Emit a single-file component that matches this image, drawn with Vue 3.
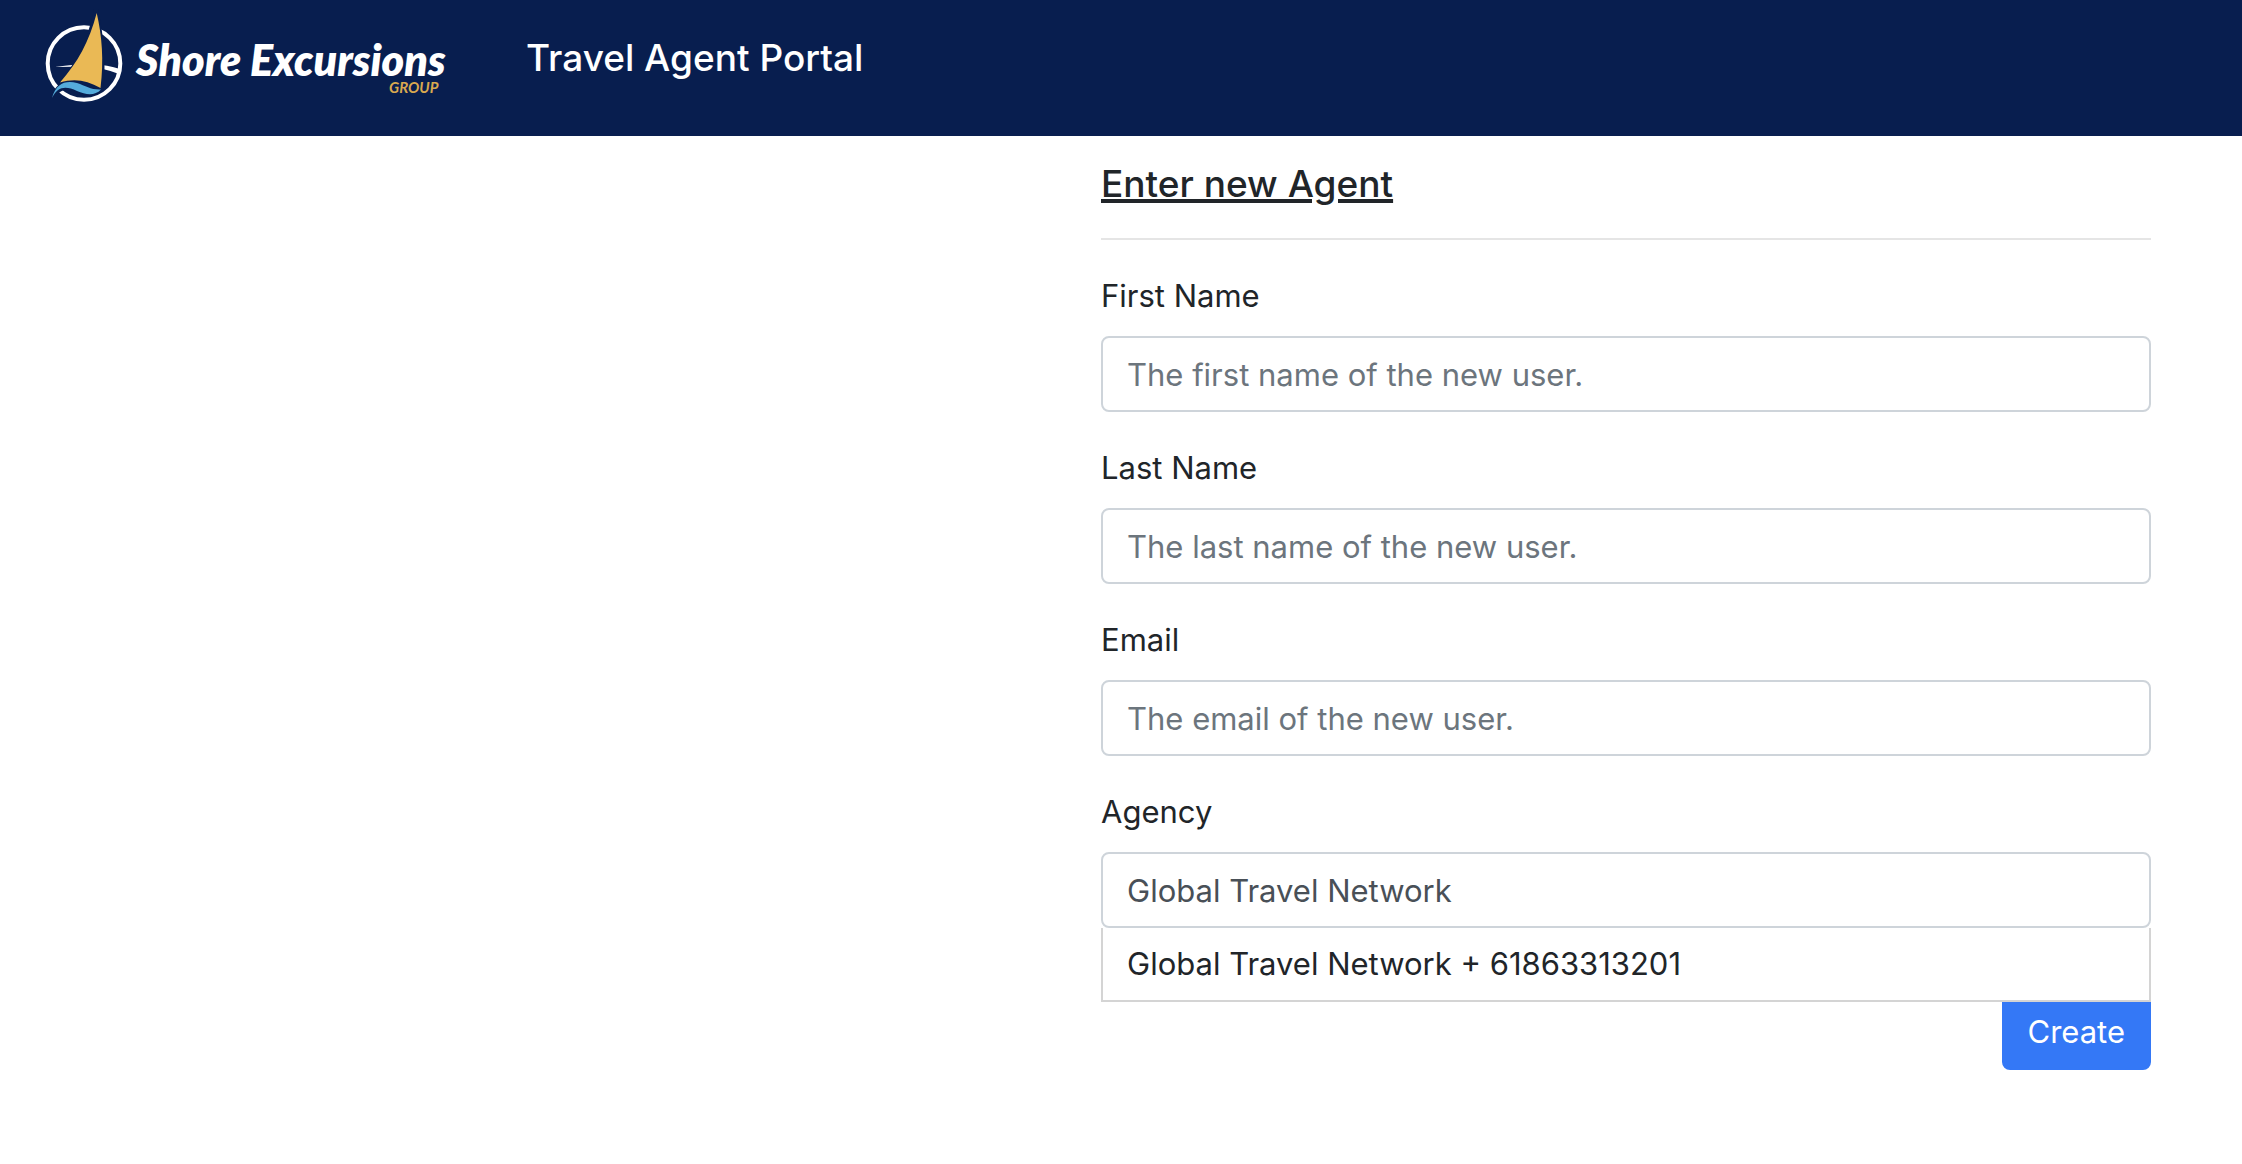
<script setup>
import { ref } from 'vue'

const fields = [
  { id: 'first-name', label: 'First Name', type: 'text', placeholder: 'The first name of the new user.' },
  { id: 'last-name', label: 'Last Name', type: 'text', placeholder: 'The last name of the new user.' },
  { id: 'email', label: 'Email', type: 'email', placeholder: 'The email of the new user.' },
]

const values = ref({ 'first-name': '', 'last-name': '', email: '' })
const agency = ref('Global Travel Network')
const suggestions = ['Global Travel Network + 61863313201']
</script>

<template>
  <header class="topbar">
    <a class="brand" href="#" aria-label="Shore Excursions Group">
      <svg class="logo" width="406" height="106" viewBox="44 6 406 106">
        <circle cx="84" cy="63.500" r="36.300" fill="none" stroke="#fff" stroke-width="4" />
        <path d="M55 67 Q75 64 92 64 Q108 65 120 69 L119 74 Q108 70 99 68 Q78 66 55 67Z" fill="#fff" />
        <path d="M94 9 L98 9 C104 38 106 60 103.500 89 L101 90 C88 82 74 80 58 83 C76 64 88 40 94 9Z" fill="#081e4f" />
        <path d="M50 99 C56 79 72 78 84 82 C92 85 97 87 103 87 C98 98 84 97 75 93 C64 88 60 90 54 99Z" fill="#081e4f" />
        <path d="M96.700 13 C102 36 104 60 100.500 88 C87 80 74 78 60 82.500 C78 62 89 42 96.700 13Z" fill="#eab955" />
        <path d="M52 98 C56 83 66 80 77 83 C86 86 91 90 101 89.500 C95 96 86 95 77 91 C66 86 58 86 52 98Z" fill="#55acdb" />
        <text class="logo-name" x="136" y="76">Shore Excursions</text>
        <text class="logo-group" x="389" y="93">GROUP</text>
      </svg>
    </a>
    <span class="portal">Travel Agent Portal</span>
  </header>

  <main class="page">
    <form class="agent-form" autocomplete="off" @submit.prevent>
      <h1 class="title">Enter new Agent</h1>
      <hr class="rule" />

      <div v-for="field in fields" :key="field.id" class="group">
        <label :for="field.id">{{ field.label }}</label>
        <input :id="field.id" v-model="values[field.id]" class="control" :type="field.type" :placeholder="field.placeholder" />
      </div>

      <div class="group agency">
        <label for="agency">Agency</label>
        <input id="agency" v-model="agency" class="control" type="text" />
        <ul class="suggestions">
          <li v-for="item in suggestions" :key="item">
            <button class="suggestion" type="button">{{ item }}</button>
          </li>
        </ul>
      </div>

      <div class="actions">
        <button class="create" type="submit">Create</button>
      </div>
    </form>
  </main>
</template>

<style>
body {
  margin: 0;
  background: #fff;
}
</style>

<style scoped>
.topbar,
.page {
  font-family: Inter, "Liberation Sans", sans-serif;
  box-sizing: border-box;
}

.topbar {
  display: flex;
  align-items: flex-start;
  gap: 76px;
  padding: 6px 44px 24px;
  background: #081e4f;
  color: #fff;
}

.brand,
.logo {
  display: block;
}

.logo-name {
  font: italic 800 43px Lato, sans-serif;
  fill: #fff;
}

.logo-group {
  font: italic 700 15px Lato, sans-serif;
  fill: #d9a94f;
}

.portal {
  margin-top: 22px;
  font-size: 37px;
  font-weight: 500;
  line-height: 60px;
  white-space: nowrap;
}

.page {
  display: grid;
  grid-template-columns: 1fr 1fr;
  padding: 24px 91px 92px 51px;
}

.agent-form {
  grid-column: 2;
  color: #212529;
  font-size: 31px;
  line-height: 48px;
}

.title {
  margin: 0;
  font-size: 37px;
  font-weight: 500;
  line-height: 48px;
  text-decoration: underline;
  text-decoration-thickness: 4px;
  text-underline-offset: 2px;
}

.rule {
  margin: 30px 0 32px;
  border: 0;
  border-top: 2px solid #e5e5e5;
}

.group {
  position: relative;
  margin-bottom: 32px;
}

.group label {
  display: block;
  margin-bottom: 16px;
}

.control {
  display: block;
  box-sizing: border-box;
  width: 100%;
  height: 76px;
  padding: 12px 24px;
  border: 2px solid #ced4da;
  border-radius: 8px;
  background: #fff;
  color: #495057;
  font: inherit;
  outline: none;
}

.control::placeholder {
  color: #6c757d;
  opacity: 1;
}

/* The suggestion list opens over whatever follows the field. */
.suggestions {
  position: absolute;
  z-index: 1;
  top: 100%;
  left: 0;
  right: 0;
  margin: 0;
  padding: 0;
  border: 2px solid #d4d4d4;
  border-top: 0;
  background: #fff;
  list-style: none;
}

.suggestion {
  display: block;
  width: 100%;
  padding: 12px 24px;
  border: 0;
  background: none;
  color: #212529;
  font: inherit;
  text-align: left;
}

.agency {
  margin-bottom: 66px;
}

.actions {
  display: flex;
  justify-content: flex-end;
}

.create {
  padding: 12px 24px;
  border: 2px solid #3478f6;
  border-radius: 8px;
  background: #3478f6;
  color: #fff;
  font: inherit;
}
</style>
